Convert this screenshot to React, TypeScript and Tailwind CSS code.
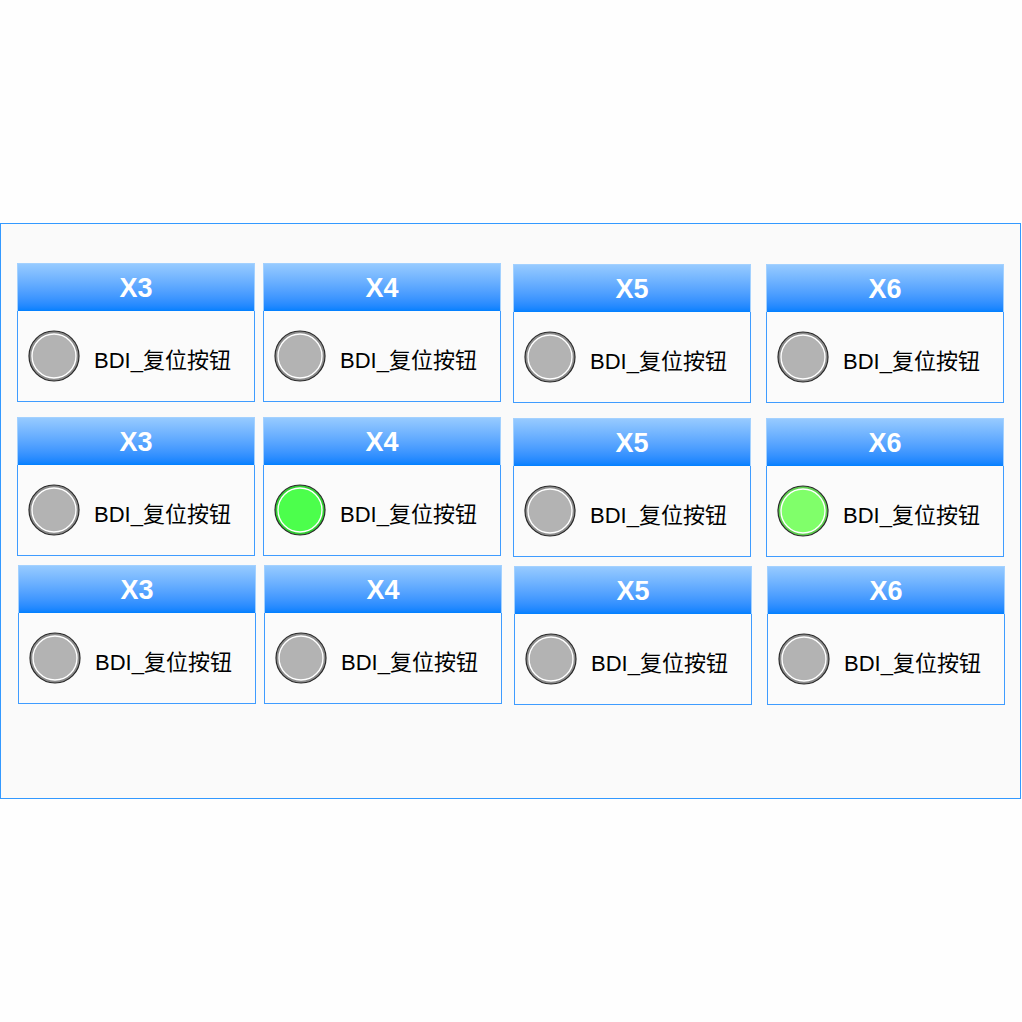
import React from "react";

type Lamp = "off" | "on" | "onLight";

type Cell = { label: string; lamp: Lamp; ml: string; mt: string };

const rows: { cls: string; cells: Cell[] }[] = [
  {
    cls: "mt-[39px] pl-[16px]",
    cells: [
      { label: "X3", lamp: "off", ml: "ml-0", mt: "mt-0" },
      { label: "X4", lamp: "off", ml: "ml-[8px]", mt: "mt-0" },
      { label: "X5", lamp: "off", ml: "ml-[12px]", mt: "mt-px" },
      { label: "X6", lamp: "off", ml: "ml-[15px]", mt: "mt-px" },
    ],
  },
  {
    cls: "mt-[14px] pl-[16px]",
    cells: [
      { label: "X3", lamp: "off", ml: "ml-0", mt: "mt-0" },
      { label: "X4", lamp: "on", ml: "ml-[8px]", mt: "mt-0" },
      { label: "X5", lamp: "off", ml: "ml-[12px]", mt: "mt-px" },
      { label: "X6", lamp: "onLight", ml: "ml-[15px]", mt: "mt-px" },
    ],
  },
  {
    cls: "mt-[8px] pl-[17px]",
    cells: [
      { label: "X3", lamp: "off", ml: "ml-0", mt: "mt-0" },
      { label: "X4", lamp: "off", ml: "ml-[8px]", mt: "mt-0" },
      { label: "X5", lamp: "off", ml: "ml-[12px]", mt: "mt-px" },
      { label: "X6", lamp: "off", ml: "ml-[15px]", mt: "mt-px" },
    ],
  },
];

const lampColors: Record<Lamp, { ring: string; fill: string }> = {
  off: { ring: "#8c8c8c", fill: "#b3b3b3" },
  on: { ring: "#33cc33", fill: "#4cff4c" },
  onLight: { ring: "#5fcf4f", fill: "#80ff6a" },
};

function Indicator({ state }: { state: Lamp }) {
  const c = lampColors[state];
  return (
    <svg width="52" height="52" viewBox="0 0 52 52" className="shrink-0">
      <circle cx="26" cy="26" r="25" fill={c.ring} stroke="#2a2a2a" strokeWidth="1.2" />
      <circle cx="26" cy="26" r="22" fill={c.fill} stroke="#ffffff" strokeWidth="1.4" />
    </svg>
  );
}

function Tile({ cell }: { cell: Cell }) {
  return (
    <div className={`w-[238px] flex flex-col ${cell.ml} ${cell.mt}`}>
      <div className="h-[48px] border border-b-0 border-[#a3d1ff] bg-gradient-to-b from-[#96caff] to-[#0080ff] flex items-center justify-center">
        <span className="text-white text-[27px] font-bold leading-none font-['Liberation_Sans',Arial,sans-serif] mt-[2px]">
          {cell.label}
        </span>
      </div>
      <div className="h-[91px] border border-t-0 border-[#3f9cff] bg-[#fbfbfb] flex items-center pl-[10px]">
        <Indicator state={cell.lamp} />
        <span className="ml-[14px] mt-[9px] text-[22px] leading-none text-black font-['Liberation_Sans','Noto_Sans_CJK_SC',sans-serif]">
          BDI_复位按钮
        </span>
      </div>
    </div>
  );
}

export default function App() {
  return (
    <div className="w-[1022px] h-[1022px] bg-[#fefefe] pt-[223px]">
      <div className="w-[1021px] h-[576px] border border-[#3399ff] bg-[#fafafa] flex flex-col">
        {rows.map((row, i) => (
          <div key={i} className={`flex items-start ${row.cls}`}>
            {row.cells.map((cell, j) => (
              <Tile key={j} cell={cell} />
            ))}
          </div>
        ))}
      </div>
    </div>
  );
}
